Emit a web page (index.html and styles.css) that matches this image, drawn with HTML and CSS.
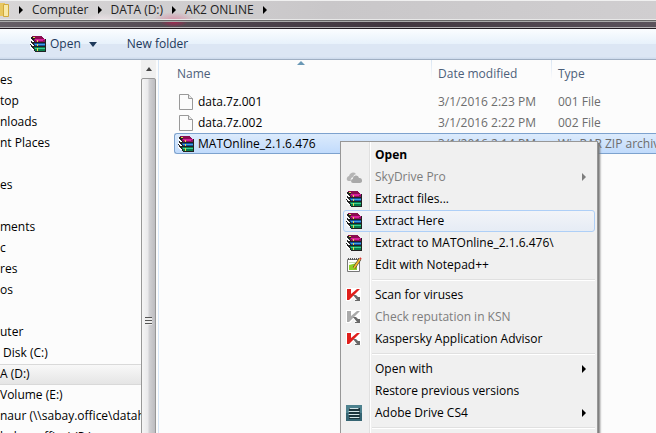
FILE: index.html
```html
<!DOCTYPE html>
<html lang="en">
<head>
<meta charset="utf-8">
<title>AK2 ONLINE</title>
<link rel="stylesheet" href="styles.css">
</head>
<body>
<svg class="defs" aria-hidden="true">
  <symbol id="books" viewBox="0 0 16 16">
    <g shape-rendering="crispEdges">
    <path fill="#222" d="M1 1h12v1h1v1h2v13H5v-1H4v-1H2v-1H1v-1H0v-2h1V9H0V6h1V4H0V2h1z"/>
    <path fill="#8a0d50" d="M2 0h10v1h1v1h1v1H5V2H3V1H2z"/>
    <path fill="#8c1060" d="M4 3h11v3H5V5H4z"/><path fill="#d8209a" d="M5 3h10v1H5zM6 4h7v1H6z"/>
    <path fill="#134f9c" d="M4 7h11v3H5V9H4z"/><path fill="#3ea0e6" d="M5 8h10v1H5z"/>
    <path fill="#0a7d4c" d="M4 11h11v4H5v-2H4z"/><path fill="#3bd293" d="M5 12h10v1H5z"/>
    <path fill="#fff" d="M0 2h1v1h1v1h1v1h1v1H2V5H1V4H0zM0 6h1v1h1v1h1v1h1v1H2V9H1V8H0zM0 10h1v1h1v1h1v1h1v1H2v-1H1v-1H0z"/>
    <path fill="#e8d84a" d="M3 1h2v1H3zM7 4h1v2H7zM7 8h1v2H7zM7 12h1v3H7z"/>
    </g>
  </symbol>
  <symbol id="page" viewBox="0 0 14 16">
    <path fill="#fbfbfb" stroke="#999" d="M.5.5h9l4 4v11H.5z"/><path fill="#e8e8e8" stroke="#999" d="M9.500.5v4h4"/>
  </symbol>
  <symbol id="kasper" viewBox="0 0 16 16">
    <path fill="#fff" d="M0 1h15v13H9L8 10l-4 4H0z"/>
    <path class="k-main" d="M1 2h4v5l6-5h3L3 13H1z"/>
    <path class="k-foot" d="M7 8h3l2 2h2v4H9v-1h2z"/>
  </symbol>
</svg>
<div class="window">
  <nav class="address" aria-label="Address">
    <svg class="folder" viewBox="0 0 10 16"><path fill="#e8c760" d="M0 1h5v13H0z"/><path fill="#f8e9a8" stroke="#d1a93c" d="M3.500 2.500h5v12h-5z"/></svg>
    <i class="tri"></i><a href="#">Computer</a>
    <i class="tri"></i><a href="#">DATA (D:)</a>
    <i class="tri"></i><a href="#">AK2 ONLINE</a>
    <i class="tri"></i>
  </nav>
  <div class="frame"></div>
  <div class="toolbar">
    <button class="open"><svg class="icon"><use href="#books"/></svg>Open<i class="down"></i></button>
    <button>New folder</button>
  </div>
  <div class="content">
    <aside class="sidebar">
      <ul>
        <li>es</li><li>top</li><li>nloads</li><li>nt Places</li><li></li>
        <li>es</li><li></li>
        <li>ments</li><li>c</li><li>res</li><li>os</li><li></li>
        <li>uter</li><li class="drive">Disk (C:)</li><li class="current">A (D:)</li><li>Volume (E:)</li><li>naur (\\sabay.office\dataho</li><li>kubay.office) (P:)</li>
      </ul>
    </aside>
    <div class="scroll"><i class="up"></i><div class="thumb"><i class="grip"></i></div></div>
    <main>
      <i class="sort"></i>
      <table>
        <colgroup><col class="c-name"><col class="c-date"><col></colgroup>
        <thead><tr><th>Name</th><th>Date modified</th><th>Type</th></tr></thead>
        <tbody>
          <tr><td><span><svg class="icon"><use href="#page"/></svg>data.7z.001</span></td><td>3/1/2016 2:23 PM</td><td>001 File</td></tr>
          <tr><td><span><svg class="icon"><use href="#page"/></svg>data.7z.002</span></td><td>3/1/2016 2:22 PM</td><td>002 File</td></tr>
          <tr class="selected"><td><span><svg class="icon"><use href="#books"/></svg>MATOnline_2.1.6.476</span></td><td>3/1/2016 2:14 PM</td><td>WinRAR ZIP archive</td></tr>
        </tbody>
      </table>
    </main>
  </div>
  <div class="menu" role="menu">
    <button role="menuitem" class="default">Open</button>
    <button role="menuitem" disabled class="sub"><svg class="icon" viewBox="0 0 16 16"><path fill="#b5b5b5" d="M1 11a3 3 0 0 1 2-4 4 4 0 0 1 7-2 4 4 0 0 0-3 3 3 3 0 0 0-2 4H3a2 2 0 0 1-2-1z"/><path fill="#a9a9a9" d="M7 14a2 2 0 0 1 0-4 3 3 0 0 1 6-1 2.500 2.500 0 0 1 1 5z"/></svg>SkyDrive Pro</button>
    <button role="menuitem"><svg class="icon"><use href="#books"/></svg>Extract files...</button>
    <button role="menuitem" class="hot"><svg class="icon"><use href="#books"/></svg>Extract Here</button>
    <button role="menuitem"><svg class="icon"><use href="#books"/></svg>Extract to MATOnline_2.1.6.476\</button>
    <button role="menuitem"><svg class="icon" viewBox="0 0 16 16"><path fill="#fff" stroke="#777" d="M1.500 2.500h12v12h-12z"/><path stroke="#555" stroke-dasharray="1 1" stroke-width="2" d="M2 2h11"/><path fill="#8ccf25" d="M3 8l8-2v7H3z"/><path stroke="#c8dcae" d="M3 5.500h7"/><path stroke="#333" stroke-width="3" d="M8 11l6-9"/><path stroke="#f1b52b" stroke-width="2" d="M8 11l6-9"/><path stroke="#d33" stroke-width="2" d="M14 2l1-1"/></svg>Edit with Notepad++</button>
    <hr>
    <button role="menuitem"><svg class="icon red"><use href="#kasper"/></svg>Scan for viruses</button>
    <button role="menuitem" disabled><svg class="icon gray"><use href="#kasper"/></svg>Check reputation in KSN</button>
    <button role="menuitem"><svg class="icon red"><use href="#kasper"/></svg>Kaspersky Application Advisor</button>
    <hr>
    <button role="menuitem" class="sub">Open with</button>
    <button role="menuitem">Restore previous versions</button>
    <button role="menuitem" class="sub"><svg class="icon" viewBox="0 0 16 16"><path fill="#4d818e" d="M0 0h16v16H0z"/><path fill="#356472" d="M0 8h16v8H0z"/><path fill="#1b343c" d="M3 3h11v11H3z"/><path stroke="#d5e5e8" stroke-linecap="round" d="M4 3.500h8M3 6.500h10M3 9.500h10M4 12.500h9"/></svg>Adobe Drive CS4</button>
    <hr>
  </div>
</div>
</body>
</html>
```
FILE: styles.css
```css
* { box-sizing: border-box; }
body { margin: 0; overflow: hidden; background: #fcfcfc; color: #000; font: 12px/20px "Open Sans", "Noto Sans", sans-serif; }
button { margin: 0; padding: 0; border: 0; background: none; color: inherit; font: inherit; text-align: left; }
a { color: inherit; text-decoration: none; }
.defs { display: none; }
.window { position: relative; display: flex; flex-direction: column; height: 100vh; overflow: hidden; }
.icon { flex: none; width: 16px; height: 16px; }

.address { flex: none; display: flex; align-items: center; height: 20px; border-top: 1px solid #f0f0f0; border-bottom: 1px solid #e8e8e8; background: radial-gradient(ellipse 20px 8px at 104px 20px, #eee3e8, transparent), radial-gradient(ellipse 22px 9px at 174px 20px, #d892a8, transparent), linear-gradient(90deg, #d8d6d7, #c9c7c9 50%, #d0ced0); color: #222; }
.folder { width: 10px; height: 16px; margin-right: 9px; }
.tri { width: 0; border: 4px solid transparent; border-left-color: #000; border-right: 0; }
.address a { margin: 0 9px; }
.frame { flex: none; height: 9px; border-top: 1px solid #666; border-bottom: 1px solid #241d24; background: radial-gradient(ellipse 14px 5px at 174px 1px, #a02850, transparent), linear-gradient(90deg, #665f66, #4a414a 40%, #41363f 60%, #5b535c); box-shadow: inset 0 1px #aaa, inset 0 -1px #b5b3b5; }
.toolbar { flex: none; display: flex; align-items: center; gap: 30px; height: 31px; padding-left: 30px; border-bottom: 1px solid #a0afc3; background: linear-gradient(#fbfdff, #e7f1fb 50%, #dce6f4 50%, #dce6f4 92%, #cbd9eb); color: #1e395b; }
.open { display: flex; align-items: center; gap: 4px; }
.down { margin-left: 4px; border: 4px solid transparent; border-top: 5px solid #1e395b; border-bottom: 0; }

.content { flex: 1; display: flex; min-height: 0; overflow: hidden; }
.sidebar { flex: none; width: 141px; padding-top: 10px; overflow: hidden; }
.sidebar ul { margin: 0; padding: 0; list-style: none; }
.sidebar li { height: 21px; white-space: nowrap; overflow: hidden; }
.sidebar .drive { padding-left: 3px; }
.sidebar .current { border: solid #d9d9d9; border-width: 1px 0; background: linear-gradient(#f8f8f8, #e5e5e5); line-height: 18px; }
.scroll { flex: none; display: flex; flex-direction: column; align-items: center; width: 15px; background: #f0f0f0; }
.up { height: 11px; margin-bottom: 7px; border: 3px solid transparent; border-top-width: 7px; border-bottom: 4px solid #444; }
.thumb { flex: 1; display: flex; align-items: center; justify-content: center; width: 15px; margin-bottom: -130px; border: 1px solid #979797; border-radius: 2px; background: linear-gradient(90deg, #f5f5f5, #e9e9eb 45%, #d1d1d4 55%, #bcbcc0); }
.grip { width: 7px; height: 8px; background: repeating-linear-gradient(#555 0 1px, #eee 1px 3px); }

main { flex: 1; position: relative; min-width: 0; margin-left: 2px; padding-left: 15px; border-left: 1px solid #d6e5f5; overflow: hidden; }
.sort { position: absolute; top: 1px; left: 138px; border: 4px solid transparent; border-top: 0; border-bottom: 4px solid #6a98b5; }
table { width: 100%; table-layout: fixed; border-collapse: separate; border-spacing: 0; }
.c-name { width: 257px; }
.c-date { width: 120px; }
th { height: 31px; padding: 0 0 4px 7px; color: #4c607a; font-weight: 400; text-align: left; }
th:first-child { padding-left: 3px; }
th + th { background: linear-gradient(#d9e5f2, #fcfcfc) 0 0 / 1px 20px no-repeat; }
td { height: 21px; padding: 0 0 0 7px; color: #6d6d6d; white-space: nowrap; overflow: hidden; }
td:first-child { padding-left: 4px; color: #000; }
td span { display: flex; align-items: center; gap: 4px; }
.selected td { border: solid #7da2ce; border-width: 1px 0; background: linear-gradient(#dcebfc, #c1dbfc); line-height: 19px; }
.selected td:first-child { padding-left: 3px; border-left-width: 1px; border-radius: 3px 0 0 3px; }

.menu { position: absolute; top: 141px; left: 340px; width: 258px; padding: 2px; border: 1px solid #979797; background: linear-gradient(90deg, transparent 28px, #e0e0e0 28px 29px, #fff 29px 30px, transparent 30px), #f0f0f0; box-shadow: 2px 2px 2px #777; }
.menu::after { content: ""; display: block; height: 12px; }
.menu button { display: flex; align-items: center; width: 100%; height: 22px; padding-left: 31px; border: 1px solid transparent; border-radius: 3px; white-space: nowrap; }
.menu button:has(.icon) { padding-left: 2px; gap: 13px; }
.menu .default { font-weight: 700; }
.menu button:disabled { color: #7d7d7d; }
.menu .hot { border-color: #aecff7; background: linear-gradient(#f2f4f8, #e6ecf5); }
.menu .sub::after { content: ""; margin-left: auto; margin-right: 8px; border: 4px solid transparent; border-left-color: currentColor; border-right: 0; }
.menu hr { height: 2px; margin: 3px 0 3px 29px; border: solid; border-width: 1px 0; border-color: #e0e0e0 transparent #fff; }
.red { fill: #e01f1c; }
.red .k-main { fill: #e01f1c; }
.gray { fill: #aaa; }
#kasper .k-foot { fill: #444; fill-opacity: 0.8; }
.gray #kasper .k-foot { fill: #999; }
```
